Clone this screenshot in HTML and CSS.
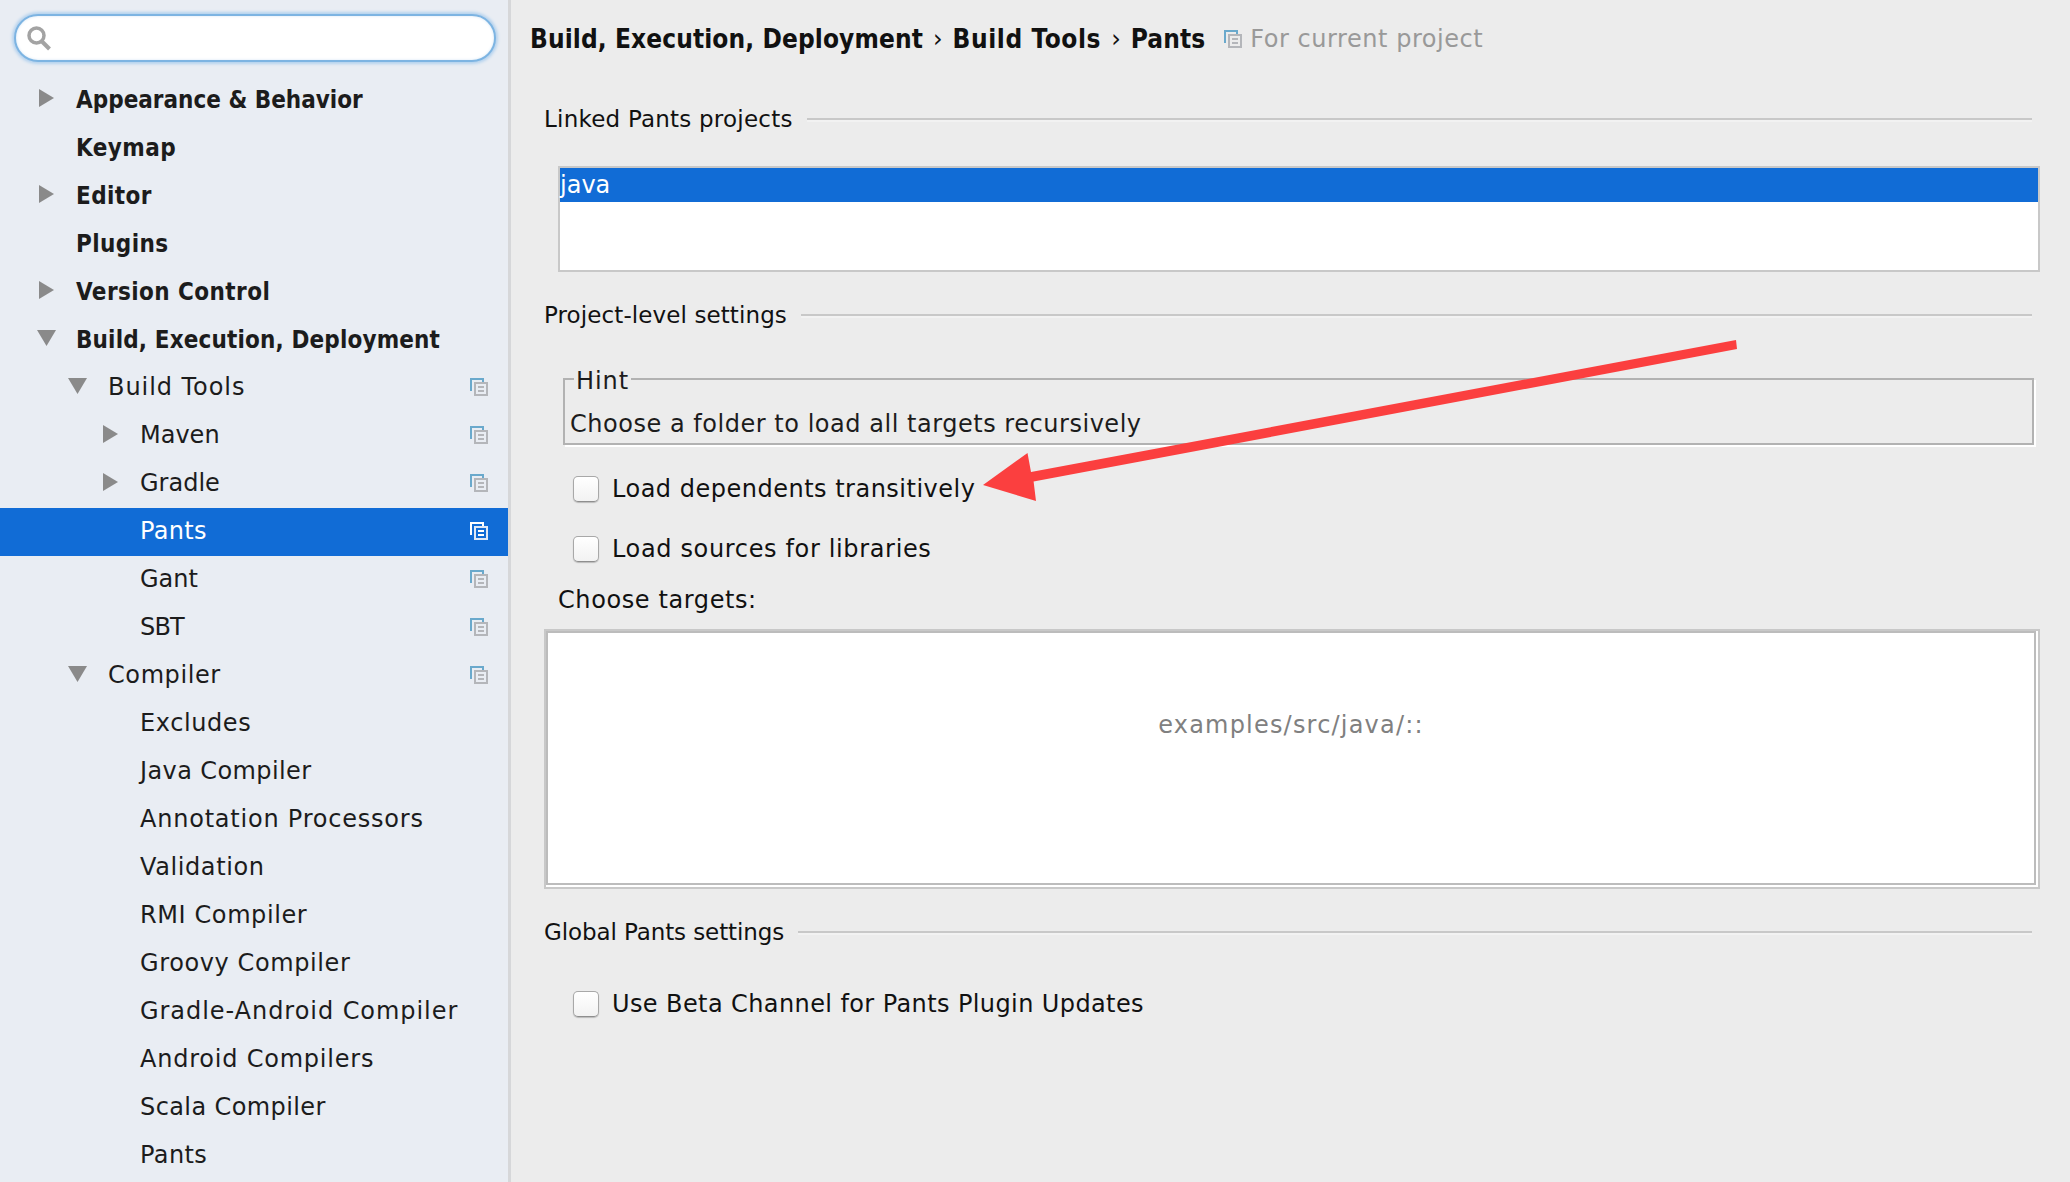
FILE: index.html
```html
<!DOCTYPE html>
<html lang="en">
<head>
<meta charset="utf-8">
<title>Settings</title>
<link rel="stylesheet" href="styles.css">
</head>
<body>
<svg class="defs" width="0" height="0" aria-hidden="true">
  <symbol id="copy" viewBox="0 0 18 18">
    <path d="M1 13V1h12v3" fill="none" stroke="#6aa9cc" stroke-width="2"/>
    <path d="M5 5h12v12H5z" fill="none" stroke="#b4b6ba" stroke-width="2"/>
    <path d="M8 9h6M8 13h6" fill="none" stroke="#b4b6ba" stroke-width="2"/>
  </symbol>
  <symbol id="copy-white" viewBox="0 0 18 18">
    <path d="M1 13V1h12v3" fill="none" stroke="#fff" stroke-width="2"/>
    <path d="M5 5h12v12H5z" fill="none" stroke="#dfe8f5" stroke-width="2"/>
    <path d="M8 9h6M8 13h6" fill="none" stroke="#fff" stroke-width="2"/>
  </symbol>
  <symbol id="right" viewBox="0 0 15 18"><path d="M0 0l15 9L0 18z" fill="#8a8a8a"/></symbol>
  <symbol id="down" viewBox="0 0 19 16"><path d="M0 0h19l-9.500 16z" fill="#8a8a8a"/></symbol>
</svg>
<div class="app">
  <aside class="sidebar">
    <div class="search">
      <svg class="search-icon" width="26" height="26" viewBox="0 0 26 26"><circle cx="10.500" cy="10.500" r="7.500" fill="none" stroke="#a3a3a3" stroke-width="3.500"/><path d="M15.500 16l8 8" stroke="#a3a3a3" stroke-width="4" fill="none"/></svg>
    </div>
    <ul class="tree">
      <li class="row top l0"><svg class="tw tw-r"><use href="#right"/></svg><span>Appearance &amp; Behavior</span></li>
      <li class="row top l0 loose"><span>Keymap</span></li>
      <li class="row top l0 loose"><svg class="tw tw-r"><use href="#right"/></svg><span>Editor</span></li>
      <li class="row top l0 loose"><span>Plugins</span></li>
      <li class="row top l0 loose"><svg class="tw tw-r"><use href="#right"/></svg><span>Version Control</span></li>
      <li class="row top l0 slight"><svg class="tw tw-d"><use href="#down"/></svg><span>Build, Execution, Deployment</span></li>
      <li class="row l1 wide"><svg class="tw tw-d"><use href="#down"/></svg><span>Build Tools</span><svg class="cp"><use href="#copy"/></svg></li>
      <li class="row l2 tight"><svg class="tw tw-r"><use href="#right"/></svg><span>Maven</span><svg class="cp"><use href="#copy"/></svg></li>
      <li class="row l2 tight"><svg class="tw tw-r"><use href="#right"/></svg><span>Gradle</span><svg class="cp"><use href="#copy"/></svg></li>
      <li class="row l2 sel"><span>Pants</span><svg class="cp"><use href="#copy-white"/></svg></li>
      <li class="row l2 tight"><span>Gant</span><svg class="cp"><use href="#copy"/></svg></li>
      <li class="row l2 tighter"><span>SBT</span><svg class="cp"><use href="#copy"/></svg></li>
      <li class="row l1"><svg class="tw tw-d"><use href="#down"/></svg><span>Compiler</span><svg class="cp"><use href="#copy"/></svg></li>
      <li class="row l2"><span>Excludes</span></li>
      <li class="row l2 narrow"><span>Java Compiler</span></li>
      <li class="row l2 open"><span>Annotation Processors</span></li>
      <li class="row l2"><span>Validation</span></li>
      <li class="row l2"><span>RMI Compiler</span></li>
      <li class="row l2"><span>Groovy Compiler</span></li>
      <li class="row l2 wide"><span>Gradle-Android Compiler</span></li>
      <li class="row l2 open"><span>Android Compilers</span></li>
      <li class="row l2 narrow"><span>Scala Compiler</span></li>
      <li class="row l2 narrow"><span>Pants</span></li>
    </ul>
  </aside>
  <main class="main">
    <header class="crumbs">
      <b class="crumb-a">Build, Execution, Deployment</b><i class="sep">›</i><b class="crumb-b">Build Tools</b><i class="sep">›</i><b class="crumb-c">Pants</b>
      <svg class="cp-small"><use href="#copy"/></svg><span class="scope">For current project</span>
    </header>
    <div class="group g1"><span>Linked Pants projects</span><hr></div>
    <div class="list"><div class="list-sel">java</div></div>
    <div class="group g2"><span>Project-level settings</span><hr></div>
    <fieldset class="hint"><legend>Hint</legend><div>Choose a folder to load all targets recursively</div></fieldset>
    <label class="check c1"><span class="box"></span>Load dependents transitively</label>
    <label class="check c2"><span class="box"></span>Load sources for libraries</label>
    <div class="choose">Choose targets:</div>
    <div class="targets"><div class="targets-in"><span>examples/src/java/::</span></div></div>
    <div class="group g3"><span>Global Pants settings</span><hr></div>
    <label class="check c3"><span class="box"></span>Use Beta Channel for Pants Plugin Updates</label>
  </main>
  <svg class="arrow" width="2070" height="1182" viewBox="0 0 2070 1182"><polygon points="1736,340 1737,349 1033.600,481.600 1036,501 983,485 1027.500,453 1031,472" fill="#fb3f3f"/></svg>
</div>
</body>
</html>
```
FILE: styles.css
```css
* { box-sizing: border-box; }
html, body { margin: 0; padding: 0; height: 100%; overflow: hidden; }
body { font-family: "DejaVu Sans", sans-serif; font-size: 24px; color: #1c1c1c; }
.defs { position: absolute; }
.app { display: flex; height: 1182px; width: 2070px; position: relative; overflow: hidden; }

.sidebar { width: 511px; flex: none; background: #e9edf3; border-right: 3px solid #d6d7d9; overflow: hidden; }
.search { margin: 14px 0 0 14px; width: 482px; height: 48px; background: #fff; border-radius: 24px; border: 2px solid #7db4e2; box-shadow: 0 0 3px 2px #b4d2ee, inset 0 0 3px #d6e6f5; display: flex; align-items: center; padding-left: 10px; }
.search-icon { flex: none; }
.tree { list-style: none; margin: 14px 0 0; padding: 0; }
.row { height: 48px; display: flex; align-items: center; position: relative; white-space: nowrap; letter-spacing: 0.6px; padding-bottom: 2px; }
.top { font-family: "DejaVu Sans Condensed", "DejaVu Sans", sans-serif; font-weight: 700; letter-spacing: 0; padding-bottom: 0; }
.loose { letter-spacing: 0.42px; }
.slight { letter-spacing: 0.14px; }
.tight { letter-spacing: 0; }
.tighter { letter-spacing: -0.8px; }
.narrow { letter-spacing: 0.4px; }
.open { letter-spacing: 0.78px; }
.wide { letter-spacing: 0.95px; }
.l0 { padding-left: 76px; }
.l1 { padding-left: 108px; }
.l2 { padding-left: 140px; }
.sel { background: #116cd6; color: #fff; letter-spacing: 0.3px; }
.tw { position: absolute; }
.tw-r { width: 15px; height: 18px; top: 13px; }
.tw-d { width: 19px; height: 16px; top: 14px; }
.l0 .tw-r { left: 39px; }
.l0 .tw-d { left: 37px; }
.l1 .tw-d { left: 68px; }
.l2 .tw-r { left: 103px; }
.cp { position: absolute; left: 470px; top: 14px; width: 18px; height: 18px; }

.main { flex: 1; background: #ececec; min-width: 0; }
.crumbs { height: 76px; padding: 2px 0 0 19px; display: flex; align-items: center; font-size: 24px; white-space: nowrap; color: #111; }
.crumbs b { font-family: "DejaVu Sans Condensed", "DejaVu Sans", sans-serif; font-size: 26px; }
.crumb-a { letter-spacing: 0.1px; }
.crumb-b { letter-spacing: 0.6px; }
.crumb-c { letter-spacing: 0.1px; }
.sep { font-style: normal; margin: 0 10px; }
.cp-small { width: 18px; height: 18px; margin-left: 19px; margin-right: 8px; }
.scope { color: #999; letter-spacing: 0.55px; }

.group { display: flex; align-items: center; height: 32px; margin-left: 33px; margin-right: 38px; white-space: nowrap; color: #111; font-size: 23px; letter-spacing: 0.1px; }
.group span { flex: none; margin-right: 14px; }
.group hr { flex: 1; margin: 0; border: 0; height: 2px; background: #c8c8c8; box-shadow: 0 2px 0 #f2f2f2; }
.g1 { margin-top: 27px; letter-spacing: 0.22px; }
.g2 { margin-top: 27px; }
.g3 { margin-top: 27px; letter-spacing: -0.1px; }

.list { margin: 31px 0 0 47px; width: 1482px; height: 106px; background: #fff; border: 2px solid #c8c8c8; }
.list-sel { height: 34px; line-height: 34px; background: #116cd6; color: #fff; }

.hint { margin: 36px 0 0 52px; width: 1471px; height: 78px; padding: 0 0 0 5px; border: 2px solid #b2b2b2; box-shadow: 2px 2px 0 #fff; min-width: 0; letter-spacing: 0.53px; }
.hint legend { padding: 4px 2px 0; margin-left: 4px; line-height: 20px; letter-spacing: 0.9px; }
.hint div { line-height: 32px; margin-top: 17px; }

.check { display: flex; align-items: center; height: 32px; margin-left: 62px; white-space: nowrap; color: #111; letter-spacing: 0.5px; }
.box { width: 26px; height: 26px; margin-right: 13px; border-radius: 5px; border: 1px solid #a8a8a8; border-bottom-color: #8e8e8e; background: linear-gradient(#fff, #f2f2f2); box-shadow: 0 1px 1px #bbb; flex: none; }
.c1 { margin-top: 28px; }
.c2 { margin-top: 28px; letter-spacing: 0.65px; }
.choose { margin: 19px 0 0 47px; line-height: 32px; color: #111; letter-spacing: 0.6px; }
.targets { margin: 13px 0 0 33px; width: 1496px; height: 260px; background: #fff; border: 2px solid #c8c8c8; }
.targets-in { margin-right: 2px; height: 254px; border: 2px solid #bcbcbc; display: flex; justify-content: center; padding-top: 78px; color: #808080; letter-spacing: 1.2px; }
.c3 { margin-top: 40px; letter-spacing: 0.4px; }

.arrow { position: absolute; left: 0; top: 0; pointer-events: none; }
```
